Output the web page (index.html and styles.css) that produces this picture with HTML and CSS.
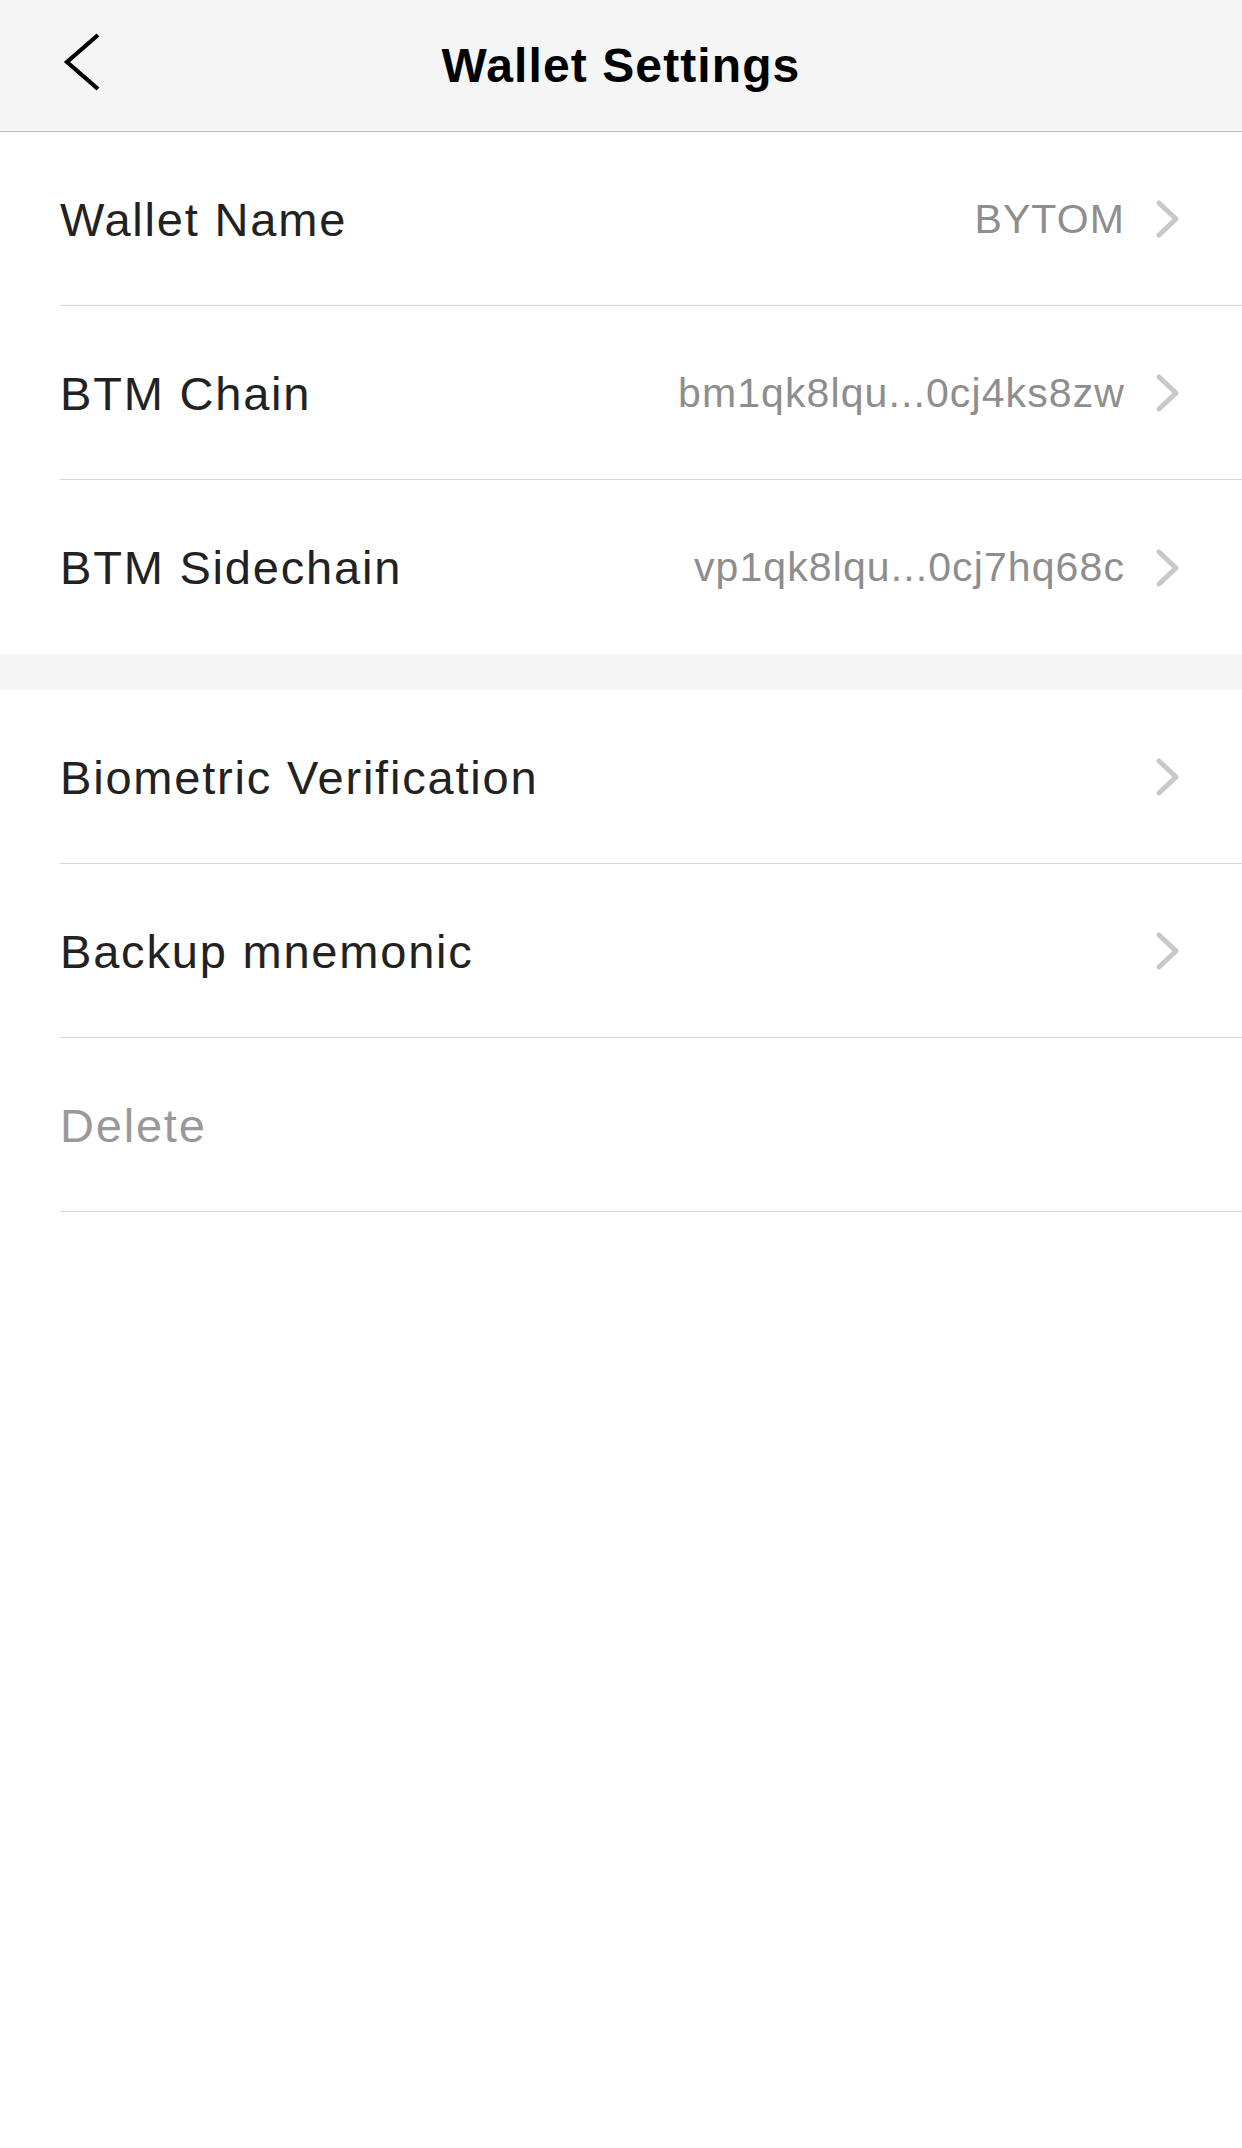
FILE: index.html
```html
<!DOCTYPE html>
<html>
<head>
<meta charset="utf-8">
<link rel="stylesheet" href="styles.css">
</head>
<body>
<header class="nav">
  <svg class="back" width="40" height="60" viewBox="0 0 40 60"><polyline points="37,3 6,30 37,57" fill="none" stroke="#000" stroke-width="4.2"/></svg>
  <h1 class="title">Wallet Settings</h1>
</header>
<section class="group">
  <div class="row"><div class="row-body"><span class="label">Wallet Name</span><span class="value">BYTOM</span><svg class="chev" width="26" height="40" viewBox="0 0 26 40"><polyline points="4,4 21,20 4,36" fill="none" stroke="#c8c8c8" stroke-width="5" stroke-linecap="round" stroke-linejoin="round"/></svg></div></div>
  <div class="row"><div class="row-body"><span class="label">BTM Chain</span><span class="value">bm1qk8lqu...0cj4ks8zw</span><svg class="chev" width="26" height="40" viewBox="0 0 26 40"><polyline points="4,4 21,20 4,36" fill="none" stroke="#c8c8c8" stroke-width="5" stroke-linecap="round" stroke-linejoin="round"/></svg></div></div>
  <div class="row last"><div class="row-body"><span class="label">BTM Sidechain</span><span class="value">vp1qk8lqu...0cj7hq68c</span><svg class="chev" width="26" height="40" viewBox="0 0 26 40"><polyline points="4,4 21,20 4,36" fill="none" stroke="#c8c8c8" stroke-width="5" stroke-linecap="round" stroke-linejoin="round"/></svg></div></div>
</section>
<div class="gap"></div>
<section class="group">
  <div class="row"><div class="row-body"><span class="label">Biometric Verification</span><svg class="chev" width="26" height="40" viewBox="0 0 26 40"><polyline points="4,4 21,20 4,36" fill="none" stroke="#c8c8c8" stroke-width="5" stroke-linecap="round" stroke-linejoin="round"/></svg></div></div>
  <div class="row"><div class="row-body"><span class="label">Backup mnemonic</span><svg class="chev" width="26" height="40" viewBox="0 0 26 40"><polyline points="4,4 21,20 4,36" fill="none" stroke="#c8c8c8" stroke-width="5" stroke-linecap="round" stroke-linejoin="round"/></svg></div></div>
  <div class="row"><div class="row-body"><span class="label muted">Delete</span></div></div>
</section>
</body>
</html>
```
FILE: styles.css
```css
* { box-sizing: border-box; }
html, body { margin: 0; padding: 0; background: #fff; }
body {
  width: 1242px;
  height: 2148px;
  font-family: "Liberation Sans", Arial, sans-serif;
  color: #222;
}
.nav {
  height: 132px;
  background: #f5f5f5;
  border-bottom: 1px solid #b9b9b9;
  display: flex;
  align-items: center;
  justify-content: center;
  position: relative;
}
.back {
  position: absolute;
  left: 61px;
  top: 32px;
}
.title {
  margin: 0;
  font-size: 48px;
  font-weight: bold;
  letter-spacing: 1.1px;
  color: #000;
}
.group { background: #fff; }
.row { padding-left: 60px; }
.row-body {
  height: 174px;
  display: flex;
  align-items: center;
  border-bottom: 1px solid #d6d6d6;
  padding-right: 61px;
  padding-top: 1px;
}
.row.last .row-body { border-bottom: none; }
.label {
  font-size: 47px;
  letter-spacing: 1.8px;
  flex: 1;
  white-space: nowrap;
}
.label.muted { color: #999; }
.value {
  font-size: 41px;
  letter-spacing: 1.1px;
  color: #8e8e8e;
  margin-right: 30px;
  white-space: nowrap;
}
.chev { display: block; }
.gap {
  height: 36px;
  background: #f5f5f5;
}
```
